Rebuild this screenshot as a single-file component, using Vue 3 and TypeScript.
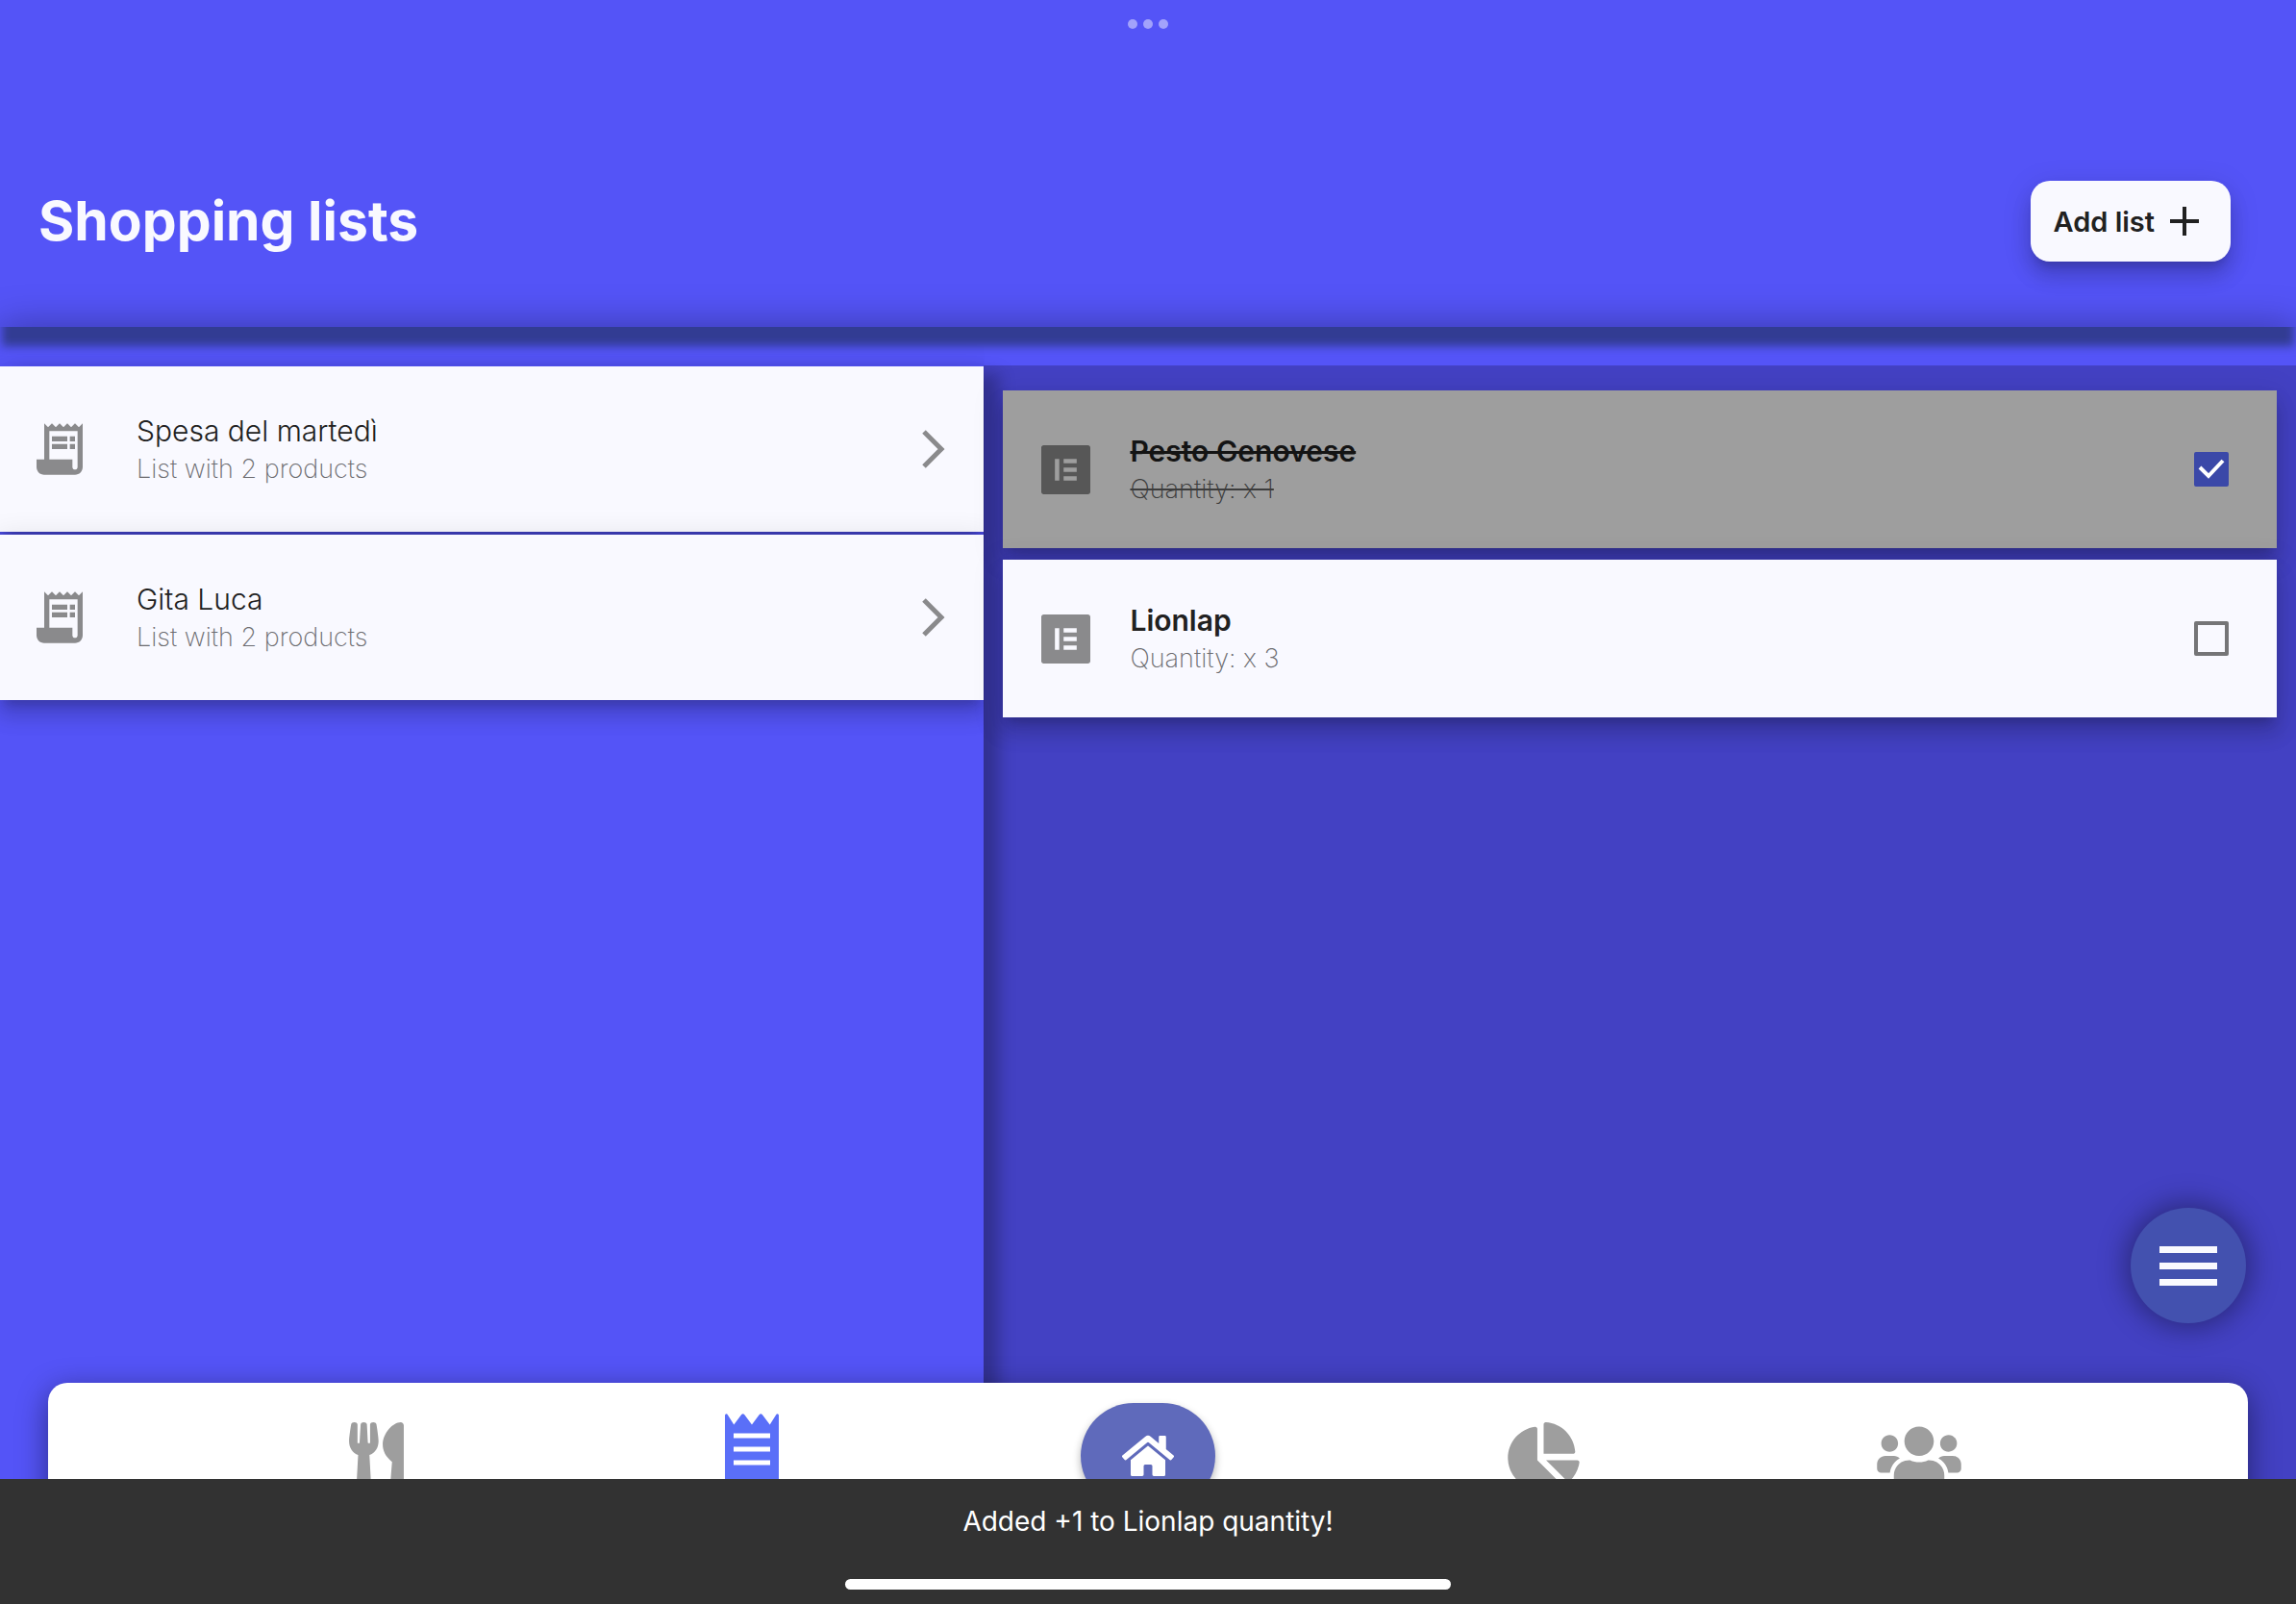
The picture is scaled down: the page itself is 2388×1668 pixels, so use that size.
<script setup lang="ts">
import { ref } from 'vue'

interface ShoppingList {
  name: string
  products: number
}

interface Product {
  name: string
  quantity: number
  done: boolean
}

const lists = ref<ShoppingList[]>([
  { name: 'Spesa del martedì', products: 2 },
  { name: 'Gita Luca', products: 2 },
])

const products = ref<Product[]>([
  { name: 'Pesto Genovese', quantity: 1, done: true },
  { name: 'Lionlap', quantity: 3, done: false },
])
</script>

<template>
  <div class="app">
    <div class="window-dots" aria-hidden="true"><i></i><i></i><i></i></div>

    <header class="header">
      <h1>Shopping lists</h1>
      <button class="add" type="button">
        <span>Add list</span>
        <svg width="30" height="30" viewBox="0 0 30 30" aria-hidden="true">
          <path d="M15 0v30M0 15h30" stroke="currentColor" stroke-width="4" />
        </svg>
      </button>
    </header>
    <div class="band"></div>

    <main class="panes">
      <section class="lists" aria-label="Lists">
        <button v-for="list in lists" :key="list.name" class="list" type="button">
          <svg class="list-icon" viewBox="0 0 24 24" fill="currentColor" aria-hidden="true">
            <path d="M19.5 3.5L18 2l-1.5 1.5L15 2l-1.5 1.5L12 2l-1.5 1.5L9 2 7.5 3.5 6 2v14H3v3c0 1.66 1.34 3 3 3h12c1.66 0 3-1.34 3-3V2l-1.5 1.5zM19 19c0 .55-.45 1-1 1s-1-.45-1-1v-3H8V5h11v14z" />
            <path d="M9 7h6v2H9zM16 7h2v2h-2zM9 10h6v2H9zM16 10h2v2h-2z" />
          </svg>
          <span class="text">
            <span class="name">{{ list.name }}</span>
            <span class="detail">List with {{ list.products }} products</span>
          </span>
          <svg class="chevron" width="24" height="40" viewBox="0 0 24 40" fill="none" aria-hidden="true">
            <path d="M2 2l18 18L2 38" stroke="currentColor" stroke-width="5" />
          </svg>
        </button>
      </section>

      <section class="products" aria-label="Products">
        <label v-for="product in products" :key="product.name" class="product" :class="{ done: product.done }">
          <svg class="product-icon" viewBox="0 32 448 448" fill="currentColor" aria-hidden="true">
            <path d="M425.6 32H22.4C10 32 0 42 0 54.4v403.2C0 470 10 480 22.4 480h403.2c12.4 0 22.4-10 22.4-22.4V54.4C448 42 438 32 425.6 32M164.3 355.5h-39.8v-199h39.8v199zm159.3 0H204.1v-39.8h119.5v39.8zm0-79.6H204.1v-39.8h119.5v39.8zm0-79.7H204.1v-39.8h119.5v39.8z" />
          </svg>
          <span class="text">
            <span class="name">{{ product.name }}</span>
            <span class="detail">Quantity: x {{ product.quantity }}</span>
          </span>
          <span class="check">
            <input v-model="product.done" type="checkbox" />
            <svg v-if="product.done" viewBox="0 0 36 36" fill="none" aria-hidden="true">
              <path d="M6 16l9 9L30 9" stroke="#fff" stroke-width="4" />
            </svg>
          </span>
        </label>
      </section>
    </main>

    <button class="fab" type="button" aria-label="Menu">
      <i></i><i></i><i></i>
    </button>

    <nav class="nav" aria-label="Main">
      <a href="#recipes" aria-label="Recipes">
        <svg width="57" height="70" viewBox="0 0 416 512" fill="currentColor">
          <path d="M207.9 15.2c.8 4.7 16.1 94.5 16.1 128.8 0 52.3-27.8 89.6-68.9 104.6L168 486.7c.7 13.7-10.2 25.3-24 25.3H80c-13.7 0-24.7-11.5-24-25.3l12.9-238.1C27.7 233.6 0 196.2 0 144 0 109.6 15.3 19.9 16.1 15.2 19.3-5.1 61.4-5.4 64 16.3v141.2c1.3 3.4 15.1 3.2 16 0 1.4-25.3 7.9-139.2 8-141.8 3.3-20.8 44.7-20.8 47.9 0 .2 2.7 6.6 116.5 8 141.8.9 3.2 14.8 3.4 16 0V16.3c2.6-21.6 44.8-21.4 47.9-1.1zm119.2 285.7l-15 185.1c-1.2 14 9.9 26 23.9 26h56c13.3 0 24-10.7 24-24V24c0-13.2-10.7-24-24-24-82.5 0-221.4 178.5-64.9 300.9z" />
        </svg>
      </a>
      <a class="active" href="#lists" aria-label="Shopping lists" aria-current="page">
        <svg width="56" height="88" viewBox="0 0 56 88">
          <path fill="currentColor" d="M0 1.500Q1.500-.8 3 1.500L9.300 11.500 17 1.200Q18.700-.8 20.400 1.200L28 11.500 35.600 1.200Q37.300-.8 39 1.200L46.700 11.500 53 1.500Q54.500-.8 56 1.500V86.500Q54.500 88.800 53 86.500L46.700 76.500 39 86.800Q37.300 88.800 35.600 86.800L28 76.500 20.400 86.800Q18.700 88.800 17 86.800L9.300 76.500 3 86.500Q1.500 88.800 0 86.500Z" />
          <path stroke="#fff" stroke-width="5" d="M9 23h38M9 37h38M9 51h38" />
        </svg>
      </a>
      <a class="home" href="#home" aria-label="Home">
        <svg width="54" height="48" viewBox="0 0 576 512" fill="currentColor">
          <path d="M280.37 148.26L96 300.11V464a16 16 0 0 0 16 16l112.06-.29a16 16 0 0 0 15.92-16V368a16 16 0 0 1 16-16h64a16 16 0 0 1 16 16v95.64a16 16 0 0 0 16 16.05L464 480a16 16 0 0 0 16-16V300L295.67 148.26a12.19 12.19 0 0 0-15.3 0zM571.6 251.47L488 182.56V44.05a12 12 0 0 0-12-12h-56a12 12 0 0 0-12 12v72.61L318.47 43a48 48 0 0 0-61 0L4.34 251.47a12 12 0 0 0-1.6 16.9l25.5 31A12 12 0 0 0 45.15 301l235.22-193.74a12.19 12.19 0 0 1 15.3 0L530.9 301a12 12 0 0 0 16.9-1.6l25.5-31a12 12 0 0 0-1.7-16.93z" />
        </svg>
      </a>
      <a href="#stats" aria-label="Statistics">
        <svg width="75" height="70" viewBox="0 0 544 512" fill="currentColor">
          <path d="M527.79 288H290.5l158.03 158.03c6.04 6.04 15.98 6.53 22.19.68 38.7-36.46 65.32-85.61 73.13-140.86 1.34-9.46-6.51-17.85-16.06-17.85zm-15.83-64.8C503.72 103.74 408.26 8.28 288.8.04 279.68-.59 272 7.1 272 16.24V240h223.77c9.14 0 16.82-7.68 16.19-16.8zM224 288V50.71c0-9.55-8.39-17.4-17.84-16.06C86.99 51.49-4.1 155.6.14 280.37 4.5 408.51 114.83 513.59 243.03 511.98c50.4-.63 96.97-16.87 135.26-44.03 7.9-5.6 8.42-17.23 1.57-24.08L224 288z" />
        </svg>
      </a>
      <a href="#family" aria-label="Family">
        <svg width="88" height="70" viewBox="0 0 640 512" fill="currentColor">
          <path d="M96 224c35.3 0 64-28.7 64-64s-28.7-64-64-64-64 28.7-64 64 28.7 64 64 64zm448 0c35.3 0 64-28.7 64-64s-28.7-64-64-64-64 28.7-64 64 28.7 64 64 64zm32 32h-64c-17.6 0-33.5 7.1-45.1 18.6 40.3 22.1 68.9 62 75.1 109.4h66c17.7 0 32-14.3 32-32v-32c0-35.3-28.7-64-64-64zm-256 0c61.9 0 112-50.1 112-112S381.9 32 320 32 208 82.1 208 144s50.1 112 112 112zm76.8 32h-8.3c-20.8 10-43.9 16-68.5 16s-47.6-6-68.5-16h-8.3C179.6 288 128 339.6 128 403.2V432c0 26.5 21.5 48 48 48h288c26.5 0 48-21.5 48-48v-28.8c0-63.6-51.6-115.2-115.2-115.2zm-223.7-13.4C161.5 263.1 145.6 256 128 256H64c-35.3 0-64 28.7-64 64v32c0 17.7 14.3 32 32 32h65.9c6.3-47.4 34.9-87.3 75.2-109.4z" />
        </svg>
      </a>
    </nav>

    <div class="toast" role="status">
      <p>Added +1 to Lionlap quantity!</p>
      <div class="home-indicator"></div>
    </div>
  </div>
</template>

<style>
body {
  margin: 0;
  background: #5454f7;
}
</style>

<style scoped>
.app {
  --paper: #f9f9ff;
  --ink: #212121;
  --lift: 0 10px 10px -6px rgba(0, 0, 0, 0.16), 0 16px 20px 2px rgba(0, 0, 0, 0.12), 0 6px 28px 4px rgba(0, 0, 0, 0.1);
  position: relative;
  display: flex;
  flex-direction: column;
  min-height: 100vh;
  overflow: hidden;
  background: #5454f7;
  color: var(--ink);
  font-family: Inter, "Liberation Sans", sans-serif;
}

button {
  border: 0;
  padding: 0;
  font: inherit;
  color: inherit;
  text-align: left;
  cursor: pointer;
}

.window-dots {
  display: flex;
  justify-content: center;
  gap: 6px;
  padding-top: 20px;
}

.window-dots i {
  width: 10px;
  height: 10px;
  border-radius: 50%;
  background: #a2a2fb;
}

.header {
  position: relative;
  display: flex;
  align-items: center;
  justify-content: space-between;
  box-sizing: border-box;
  height: 310px;
  padding: 90px 68px 0 40px;
  overflow: hidden;
}

.header::after {
  content: "";
  position: absolute;
  top: 100%;
  left: 0;
  right: 0;
  height: 40px;
  box-shadow: 0 0 40px rgba(0, 0, 0, 0.34);
}

h1 {
  margin: 0;
  color: var(--paper);
  font-size: 57px;
  line-height: 72px;
  font-weight: 700;
}

.add {
  display: flex;
  align-items: center;
  gap: 16px;
  height: 84px;
  padding: 0 33px 0 23px;
  border-radius: 20px;
  background: var(--paper);
  box-shadow: var(--lift);
  font-size: 29px;
  font-weight: 600;
}

.band {
  position: relative;
  height: 40px;
  overflow: hidden;
}

.band::before {
  content: "";
  position: absolute;
  left: 2px;
  right: 2px;
  top: -40px;
  height: 60px;
  background: #323c93;
  filter: blur(5px);
}

.panes {
  display: grid;
  grid-template-columns: 3fr 4fr;
  flex: 1;
}

.lists {
  position: relative;
  z-index: 1;
  display: flex;
  flex-direction: column;
  gap: 3px;
  padding-top: 1px;
  background: #5454f7;
  box-shadow: 16px 8px 16px rgba(0, 0, 0, 0.26);
}

.list {
  display: flex;
  align-items: center;
  height: 172px;
  padding: 0 40px 0 30px;
  background: var(--paper);
  box-shadow: var(--lift);
  clip-path: inset(-40px 0 -60px 0);
}

.list-icon {
  width: 64px;
  height: 64px;
  margin-right: 48px;
  color: #8a8a8c;
}

.text {
  flex: 1;
  display: flex;
  flex-direction: column;
  padding-top: 2px;
}

.name {
  font-size: 30px;
  line-height: 40px;
}

.detail {
  font-size: 27px;
  font-weight: 200;
  line-height: 40px;
  color: #6c6c70;
}

.list .name {
  font-weight: 300;
}

.chevron {
  color: #8a8a8c;
}

.products {
  display: flex;
  flex-direction: column;
  gap: 12px;
  padding: 26px 20px;
  background: #4341c3;
}

.product {
  position: relative;
  z-index: 2;
  display: flex;
  align-items: center;
  height: 164px;
  padding: 0 50px 0 40px;
  background: var(--paper);
  box-shadow: var(--lift);
}

.product-icon {
  width: 51px;
  height: 51px;
  margin-right: 41px;
  color: #8a8a8c;
}

.product .name {
  font-weight: 600;
}

.product.done {
  background: #9e9e9e;
}

.product.done .product-icon {
  color: #575757;
}

.product.done .name,
.product.done .detail {
  color: #141414;
  text-decoration: line-through;
}

.product.done .detail {
  color: #3c3c3c;
}

.check {
  display: grid;
  width: 36px;
  height: 36px;
}

.check > * {
  grid-area: 1 / 1;
}

.check input {
  appearance: none;
  box-sizing: border-box;
  width: 36px;
  height: 36px;
  margin: 0;
  border: 4px solid #757577;
  border-radius: 2px;
}

.check input:checked {
  border-color: #3b48a8;
  background: #3b48a8;
}

.check svg {
  position: relative;
  pointer-events: none;
}

.fab {
  position: absolute;
  right: 52px;
  bottom: 292px;
  z-index: 3;
  display: flex;
  flex-direction: column;
  align-items: center;
  justify-content: center;
  gap: 10px;
  width: 120px;
  height: 120px;
  border-radius: 50%;
  background: #4351af;
  box-shadow: 0 0 28px 6px rgba(0, 0, 0, 0.35);
}

.fab i {
  width: 60px;
  height: 7px;
  background: var(--paper);
}

.nav {
  position: absolute;
  left: 50px;
  right: 50px;
  bottom: 78px;
  z-index: 4;
  display: flex;
  align-items: center;
  justify-content: space-evenly;
  height: 152px;
  border-radius: 20px;
  background: #fff;
  box-shadow: 0 8px 32px rgba(0, 0, 0, 0.45);
}

.nav a {
  display: flex;
  align-items: center;
  justify-content: center;
  width: 98px;
  height: 110px;
  color: #9e9e9e;
}

.nav .active {
  color: #5a6ff8;
}

.nav .home {
  width: 140px;
  border-radius: 55px;
  background: #5f6abb;
  box-shadow: 0 4px 8px rgba(0, 0, 0, 0.3);
  color: #fff;
}

.toast {
  position: absolute;
  left: 0;
  right: 0;
  bottom: 0;
  z-index: 5;
  display: flex;
  flex-direction: column;
  align-items: center;
  justify-content: space-between;
  box-sizing: border-box;
  height: 130px;
  padding: 24px 0 15px;
  background: #323232;
}

.toast p {
  margin: 0;
  color: #fff;
  font-size: 28px;
  line-height: 40px;
}

.home-indicator {
  width: 630px;
  max-width: 60%;
  height: 11px;
  border-radius: 6px;
  background: #fff;
}
</style>
